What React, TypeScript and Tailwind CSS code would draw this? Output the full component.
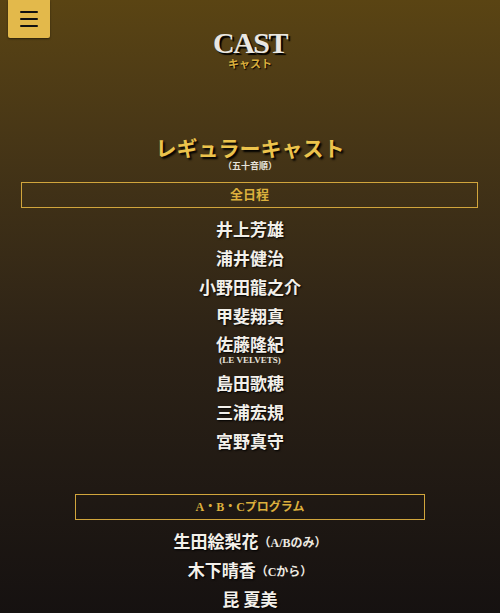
const font = { fontFamily: '"Liberation Serif", "Noto Sans CJK JP", serif' };

type Cast = { name: string; note?: string; sub?: string };

const regulars: Cast[] = [
  { name: "井上芳雄" },
  { name: "浦井健治" },
  { name: "小野田龍之介" },
  { name: "甲斐翔真" },
  { name: "佐藤隆紀", sub: "(LE VELVETS)" },
  { name: "島田歌穂" },
  { name: "三浦宏規" },
  { name: "宮野真守" },
];

const program: Cast[] = [
  { name: "生田絵梨花", note: "（A/Bのみ）" },
  { name: "木下晴香", note: "（Cから）" },
  { name: "昆 夏美" },
];

function CastRow({ item }: { item: Cast }) {
  if (item.sub) {
    return (
      <div className="flex flex-col items-center pb-[4px]">
        <span className="text-[17px] font-semibold leading-[27px] text-[#f3f0ea] [text-shadow:1px_1px_2px_#000]">
          {item.name}
        </span>
        <span className="mt-[-4px] text-[9px] font-bold leading-[11px] text-[#e6e2da]">
          {item.sub}
        </span>
      </div>
    );
  }
  return (
    <div className="flex h-[29px] items-center justify-center">
      <span className="text-[17px] font-semibold leading-[29px] text-[#f3f0ea] [text-shadow:1px_1px_2px_#000]">
        {item.name}
      </span>
      {item.note && (
        <span className="text-[12px] font-semibold text-[#eeeae2]">{item.note}</span>
      )}
    </div>
  );
}

export default function App() {
  return (
    <div
      style={font}
      className="relative min-h-[613px] overflow-hidden bg-gradient-to-b from-[#5a4413] via-[#2c2216] via-[55%] to-[#141010] pb-[20px]"
    >
      <button className="absolute left-[8px] top-0 flex h-[38px] w-[42px] flex-col items-center justify-center gap-[4.5px] rounded-b-[2px] bg-[#e3b94b] shadow-[0_1px_2px_rgba(0,0,0,0.5)]">
        <span className="h-[2.5px] w-[18px] rounded-full bg-[#111]" />
        <span className="h-[2.5px] w-[18px] rounded-full bg-[#111]" />
        <span className="h-[2.5px] w-[18px] rounded-full bg-[#111]" />
      </button>

      <header className="flex flex-col items-center pt-[28px]">
        <h1 className="text-[30px] font-bold leading-[30px] tracking-[-1.5px] text-[#e9e7e2] [text-shadow:2px_2px_1px_#000]">
          CAST
        </h1>
        <p className="mt-[0px] text-[11px] font-bold leading-[12px] text-[#d9ad3c] [text-shadow:1px_1px_1px_#000]">
          キャスト
        </p>
      </header>

      <section className="mt-[66px] flex flex-col items-center">
        <h2 className="text-[21px] font-bold leading-[26px] text-[#ecc34c] [text-shadow:2px_2px_2px_#000]">
          レギュラーキャスト
        </h2>
        <p className="mt-[-2px] text-[9px] font-bold leading-[12px] text-[#e6e2da]">
          （五十音順）
        </p>
      </section>

      <div className="mx-[21px] mr-[22px] mt-[10px] flex h-[26px] items-center justify-center border border-[#d1a53c]">
        <span className="text-[13px] font-bold text-[#dcb03d]">全日程</span>
      </div>

      <div className="mt-[8px] flex flex-col">
        {regulars.map((c) => (
          <CastRow key={c.name} item={c} />
        ))}
      </div>

      <div className="mx-auto mt-[37px] flex h-[26px] w-[350px] items-center justify-center border border-[#d1a53c]">
        <span className="text-[12px] font-bold text-[#dcb03d]">A・B・Cプログラム</span>
      </div>

      <div className="mt-[8px] flex flex-col">
        {program.map((c) => (
          <CastRow key={c.name} item={c} />
        ))}
      </div>
    </div>
  );
}
